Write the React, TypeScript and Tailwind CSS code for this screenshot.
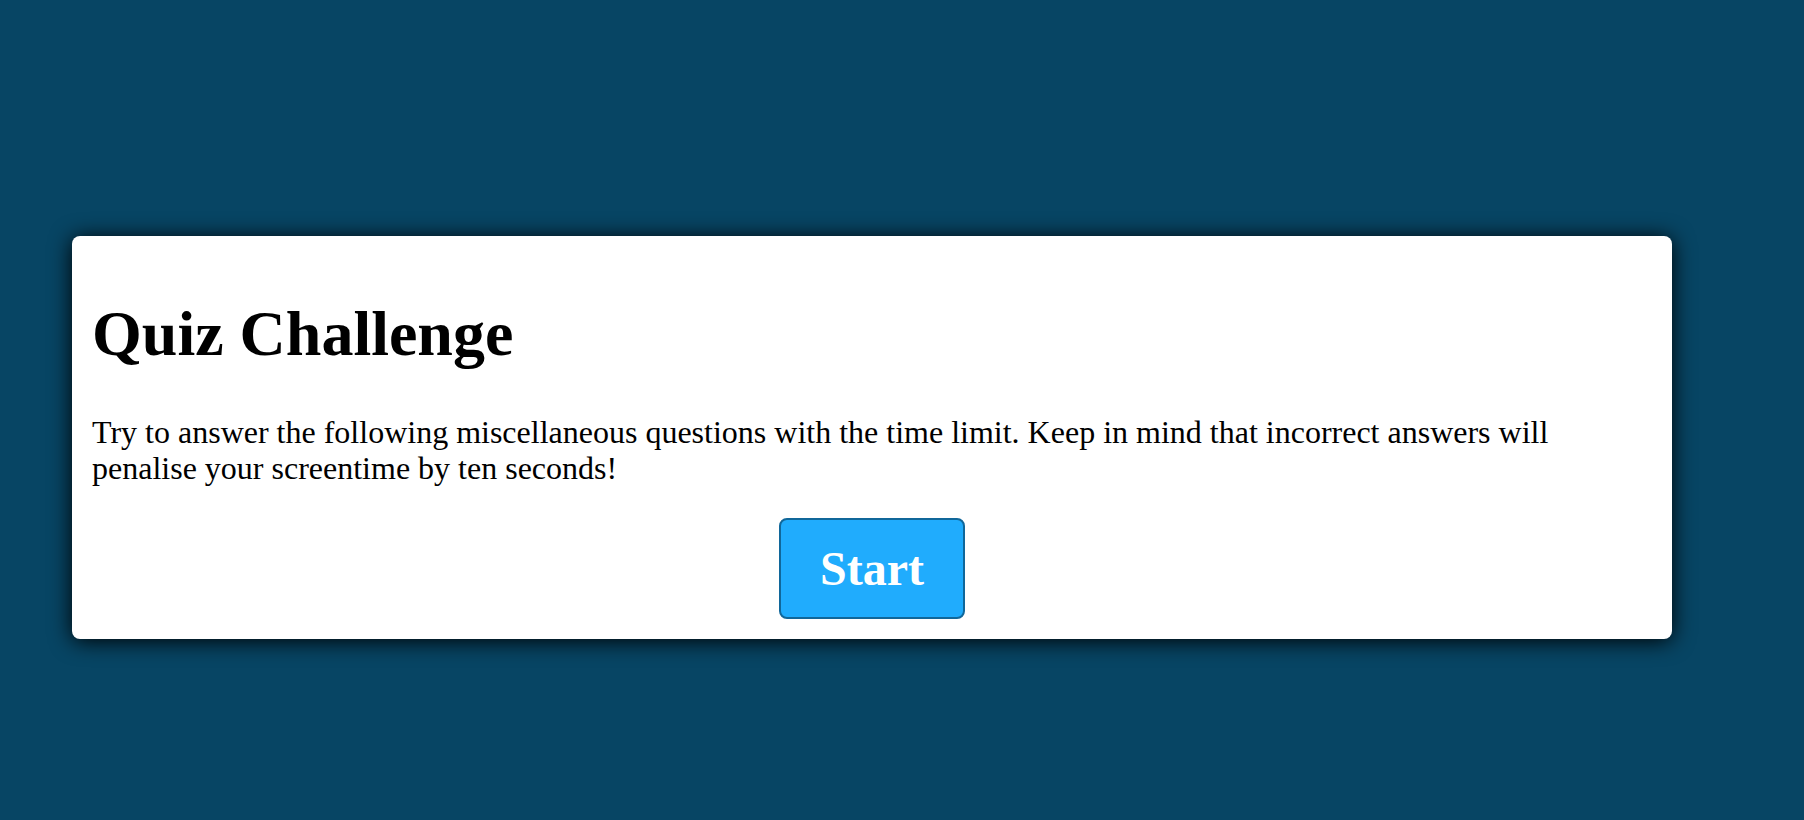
import React from "react";

const App: React.FC = () => {
  return (
    <div
      className="min-h-[820px] w-full bg-[#074564] pt-[236px]"
      style={{ fontFamily: '"Liberation Serif", "Times New Roman", serif' }}
    >
      <div className="ml-[72px] w-[1600px] rounded-lg bg-white px-[20px] pt-[18px] pb-[20px] text-black shadow-[0_2px_22px_rgba(0,0,0,1)]">
        <h1 className="my-[43px] text-[64px] font-bold leading-[1.15]">
          Quiz Challenge
        </h1>
        <p className="pr-[60px] text-[32px] leading-[1.15]">
          Try to answer the following miscellaneous questions with the time
          limit. Keep in mind that incorrect answers will penalise your
          screentime by ten seconds!
        </p>
        <div className="mt-[31px] flex justify-center">
          <button className="rounded-lg border-2 border-[#10679a] bg-[#20acfd] px-[39px] py-[21px] text-[48px] font-bold leading-[1.15] text-white">
            Start
          </button>
        </div>
      </div>
    </div>
  );
};

export default App;
